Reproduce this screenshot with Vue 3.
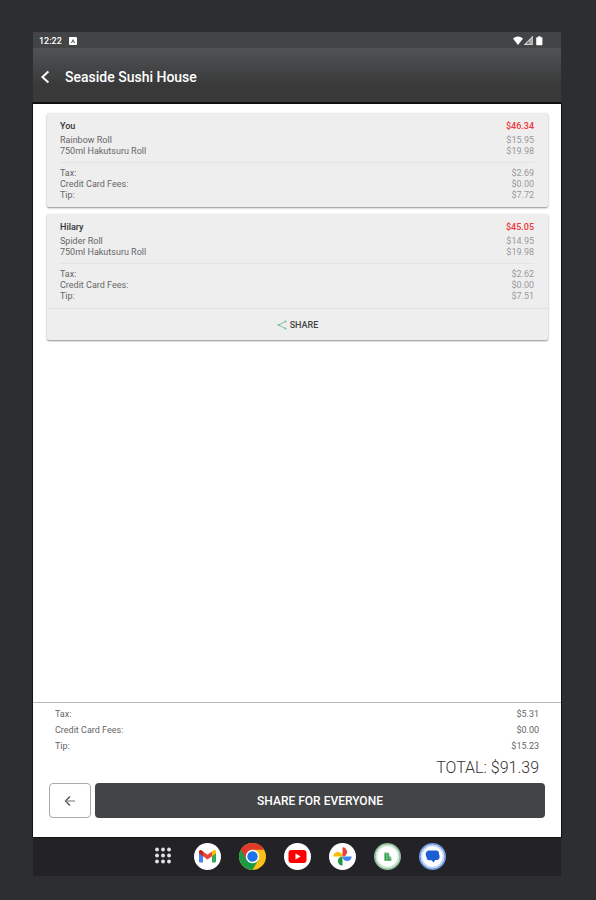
<template>
  <div class="page">
    <div class="screen">
      <div class="status">
        <span class="time">12:22</span>
        <svg class="badge" viewBox="0 0 8 8" aria-hidden="true">
          <rect width="8" height="8" rx="1" fill="#fff" />
          <path d="M4 2L6 6H5L4 4L3 6H2Z" fill="#4a4c4e" />
        </svg>
        <svg class="signals" viewBox="0 0 30 10" aria-hidden="true">
          <path d="M0 2.6Q5 -1.4 10 2.6L5 9Z" fill="#fff" />
          <path d="M12 8.4H19.4V1Z" fill="none" stroke="#ddd" stroke-width="1.1" />
          <path d="M15.8 8.6V5.2L19.6 1.4V8.6Z" fill="#aaa" />
          <path d="M24.2 1.2H25.2V0.2H27.6V1.2H28.8Q29.4 1.2 29.4 1.8V8.4Q29.4 9.2 28.8 9.2H24Q23.2 9.2 23.2 8.4V1.8Q23.2 1.2 24.2 1.2Z" fill="#fff" />
        </svg>
      </div>

      <header class="header">
        <button class="back" aria-label="Back">
          <svg viewBox="0 0 10 14"><path d="M8.4 1.4L2.4 7L8.4 12.6" fill="none" stroke="#fff" stroke-width="2" /></svg>
        </button>
        <h1>{{ restaurant }}</h1>
      </header>

      <div class="body">
        <main class="list">
          <section v-for="person in people" :key="person.name" class="card">
            <div class="details">
              <div class="row name">
                <h2>{{ person.name }}</h2>
                <span class="sum">{{ person.total }}</span>
              </div>
              <div v-for="item in person.items" :key="item.label" class="row">
                <span>{{ item.label }}</span>
                <span class="price">{{ item.price }}</span>
              </div>
              <hr>
              <div v-for="fee in person.fees" :key="fee.label" class="row">
                <span>{{ fee.label }}</span>
                <span class="price">{{ fee.price }}</span>
              </div>
            </div>
            <button v-if="person.canShare" class="share">
              <svg viewBox="0 0 10 10" aria-hidden="true">
                <path d="M8.4 1.5L1.5 5L8.4 8.5" fill="none" stroke="#6cc48c" stroke-width="0.9" />
                <circle cx="8.4" cy="1.5" r="1" fill="#6cc48c" />
                <circle cx="1.5" cy="5" r="1" fill="#6cc48c" />
                <circle cx="8.4" cy="8.5" r="1" fill="#6cc48c" />
              </svg>
              SHARE
            </button>
          </section>
        </main>

        <footer class="summary">
          <div v-for="fee in totals" :key="fee.label" class="line">
            <span>{{ fee.label }}</span>
            <span>{{ fee.price }}</span>
          </div>
          <div class="total">TOTAL: $91.39</div>
          <div class="actions">
            <button class="previous" aria-label="Previous">
              <svg viewBox="0 0 12 12"><path d="M6 1.5L1.5 6L6 10.5" fill="none" stroke="#555" stroke-width="1.4" /><path d="M1.5 6H11" stroke="#888" stroke-width="1.2" /></svg>
            </button>
            <button class="everyone">SHARE FOR EVERYONE</button>
          </div>
        </footer>
      </div>

      <nav class="dock">
        <button aria-label="All apps">
          <svg viewBox="0 0 27 27">
            <g fill="#e4e4e6">
              <circle v-for="n in 9" :key="n" :cx="8 + ((n - 1) % 3) * 6" :cy="6.5 + Math.floor((n - 1) / 3) * 6" r="1.9" />
            </g>
          </svg>
        </button>
        <button aria-label="Gmail">
          <svg viewBox="0 0 27 27">
            <circle cx="13.5" cy="13.5" r="13.5" fill="#fff" />
            <path d="M5 9V18.5Q5 19.5 6 19.5H9V11.5Z" fill="#4285f4" />
            <path d="M18 11.5V19.5H21Q22 19.5 22 18.5V9Z" fill="#34a853" />
            <path d="M18 8.6V13.2L22 10.2V8.8C22 6.8 20 6.6 19 7.6Z" fill="#fbbc04" />
            <path d="M5 10.2V8.8C5 6.8 7 6.6 8 7.6L9 8.4V13.2Z" fill="#c5221f" />
            <path d="M9 8.4L13.5 11.8L18 8.4V13.2L13.5 16.6L9 13.2Z" fill="#ea4335" />
          </svg>
        </button>
        <button aria-label="Chrome">
          <svg viewBox="0 0 27 27">
            <circle cx="13.5" cy="13.5" r="13.5" fill="#fbc116" />
            <path d="M13.5 13.5L1.8 6.8A13.5 13.5 0 0 0 13.5 27L19.3 16.9Z" fill="#1e9a47" />
            <path d="M13.5 13.5L7.7 16.9L1.8 6.8A13.5 13.5 0 0 1 25.2 6.8H13.5Z" fill="#dd3a2c" />
            <circle cx="13.5" cy="13.5" r="6.7" fill="#fff" />
            <circle cx="13.5" cy="13.5" r="5.2" fill="#1a73e8" />
          </svg>
        </button>
        <button aria-label="YouTube">
          <svg viewBox="0 0 27 27">
            <circle cx="13.5" cy="13.5" r="13.5" fill="#fff" />
            <rect x="4.5" y="7" width="18" height="13" rx="3" fill="#f00" />
            <path d="M11.5 10.6V16.4L16.6 13.5Z" fill="#fff" />
          </svg>
        </button>
        <button aria-label="Photos">
          <svg viewBox="0 0 27 27">
            <circle cx="13.5" cy="13.5" r="13.5" fill="#fff" />
            <path d="M13.5 13.5V4.3A4.6 4.6 0 0 1 13.5 13.5Z" fill="#ea4335" />
            <path d="M13.5 13.5H22.7A4.6 4.6 0 0 1 13.5 13.5Z" fill="#4285f4" />
            <path d="M13.5 13.5V22.7A4.6 4.6 0 0 1 13.5 13.5Z" fill="#1e9a47" />
            <path d="M13.5 13.5H4.3A4.6 4.6 0 0 1 13.5 13.5Z" fill="#fbbc04" />
          </svg>
        </button>
        <button aria-label="Bill splitter">
          <svg viewBox="0 0 27 27">
            <circle cx="13.5" cy="13.5" r="12.6" fill="#fff" stroke="#8fbf9c" stroke-width="1.8" />
            <circle cx="13.5" cy="13.5" r="11" fill="none" stroke="#d0e6d5" stroke-width="1.4" />
            <path d="M10.3 9.5H14.2L15.4 11V12.8L17.4 14.5V18H10.3Z" fill="#6fbf85" />
            <path d="M11.4 10.6V17M13 11.6H14.4M13 14H15M13 16.4H16.4" fill="none" stroke="#2f9a50" stroke-width="1.1" />
          </svg>
        </button>
        <button aria-label="Messages">
          <svg viewBox="0 0 27 27">
            <circle cx="13.5" cy="13.5" r="12.6" fill="#fff" stroke="#6f9be0" stroke-width="1.8" />
            <circle cx="13.5" cy="13.5" r="11" fill="none" stroke="#c3d6f5" stroke-width="1.4" />
            <path d="M10 7.5H17C19.4 7.5 20.4 9.6 20 11.4C21.4 13.6 20.4 17 17.4 17H16.2L14.5 19.6L12.5 17.2H10.5C8.2 17.2 7.4 15.6 7.8 14.4C5.8 12.6 6.6 7.5 10 7.5Z" fill="#1c5fd4" />
          </svg>
        </button>
      </nav>
    </div>
  </div>
</template>

<script setup>
import { ref } from 'vue'

const restaurant = ref('Seaside Sushi House')

const people = ref([
  {
    name: 'You',
    total: '$46.34',
    items: [
      { label: 'Rainbow Roll', price: '$15.95' },
      { label: '750ml Hakutsuru Roll', price: '$19.98' }
    ],
    fees: [
      { label: 'Tax:', price: '$2.69' },
      { label: 'Credit Card Fees:', price: '$0.00' },
      { label: 'Tip:', price: '$7.72' }
    ],
    canShare: false
  },
  {
    name: 'Hilary',
    total: '$45.05',
    items: [
      { label: 'Spider Roll', price: '$14.95' },
      { label: '750ml Hakutsuru Roll', price: '$19.98' }
    ],
    fees: [
      { label: 'Tax:', price: '$2.62' },
      { label: 'Credit Card Fees:', price: '$0.00' },
      { label: 'Tip:', price: '$7.51' }
    ],
    canShare: true
  }
])

const totals = ref([
  { label: 'Tax:', price: '$5.31' },
  { label: 'Credit Card Fees:', price: '$0.00' },
  { label: 'Tip:', price: '$15.23' }
])
</script>

<style>
body {
  margin: 0;
  background: #2d2e30;
}
</style>

<style scoped>
.page {
  box-sizing: border-box;
  display: flex;
  min-height: 100vh;
  padding: 32px 35px 24px 33px;
  font-family: Roboto, "Liberation Sans", sans-serif;
  color: #666;
}

.screen {
  flex: 1;
  display: flex;
  flex-direction: column;
}

h1,
h2 {
  margin: 0;
  font-size: inherit;
}

button {
  padding: 0;
  border: 0;
  background: none;
  font-family: inherit;
  cursor: pointer;
}

svg {
  display: block;
}

.status {
  display: flex;
  align-items: center;
  box-sizing: border-box;
  height: 16px;
  padding: 1px 18px 0 6px;
  background: #424446;
}

.time {
  color: #fff;
  font-size: 9px;
  font-weight: 500;
}

.badge {
  width: 8px;
  height: 8px;
  margin-left: 7px;
}

.signals {
  width: 30px;
  height: 10px;
  margin-left: auto;
}

.header {
  display: flex;
  align-items: center;
  box-sizing: border-box;
  height: 56px;
  padding: 3px 7px 0;
  border-bottom: 2px solid #111;
  background: linear-gradient(#525355, #414243 45%, #393939 70%, #3a3a3a);
}

.back {
  width: 10px;
  height: 14px;
  margin-right: 15px;
}

h1 {
  color: #fff;
  font-size: 14px;
  font-weight: 500;
}

.body {
  flex: 1;
  display: flex;
  flex-direction: column;
  background: #fff;
  box-shadow: 0 0 0 1px #111;
}

.list {
  flex: 1;
  display: flex;
  flex-direction: column;
  gap: 7px;
  padding: 9px 13px 9px 14px;
}

.card {
  border-radius: 2px;
  background: #eee;
  box-shadow: 0 1px 2px rgba(0, 0, 0, 0.45);
}

.details {
  padding: 6px 14px 6px 13px;
  font-size: 9px;
  line-height: 11px;
}

.row {
  display: flex;
  justify-content: space-between;
}

.name {
  margin-bottom: 2px;
  line-height: 14px;
}

.name h2 {
  color: #333;
  font-weight: 500;
}

.sum {
  color: #f0373c;
  font-weight: 500;
}

.price {
  color: #999;
}

hr {
  height: 1px;
  margin: 5px 0;
  border: 0;
  background: #e4e4e4;
}

.share {
  display: flex;
  align-items: center;
  justify-content: center;
  gap: 3px;
  width: 100%;
  height: 32px;
  border-top: 1px solid #e0e0e0;
  color: #444;
  font-size: 9px;
  font-weight: 500;
}

.share svg {
  width: 10px;
  height: 10px;
}

.summary {
  padding: 3px 16px 19px;
  border-top: 1px solid #bbb;
}

.line {
  display: flex;
  justify-content: space-between;
  padding: 0 6px;
  font-size: 9px;
  line-height: 16px;
}

.total {
  margin: 2px 0 3px;
  padding: 0 6px;
  color: #333;
  font-size: 16px;
  font-weight: 300;
  line-height: 24px;
  text-align: right;
}

.actions {
  display: flex;
  gap: 4px;
}

.actions button {
  height: 35px;
  border-radius: 4px;
}

.previous {
  display: flex;
  align-items: center;
  justify-content: center;
  width: 42px;
  border: 1px solid #aaa;
}

.previous svg {
  width: 12px;
  height: 12px;
}

.everyone {
  flex: 1;
  background: #434446;
  color: #fff;
  font-size: 12px;
  font-weight: 500;
}

.dock {
  display: flex;
  align-items: center;
  justify-content: center;
  gap: 18px;
  box-sizing: border-box;
  height: 39px;
  padding-bottom: 2px;
  border-top: 1px solid #111;
  background: #232327;
}

.dock button,
.dock svg {
  width: 27px;
  height: 27px;
}
</style>
